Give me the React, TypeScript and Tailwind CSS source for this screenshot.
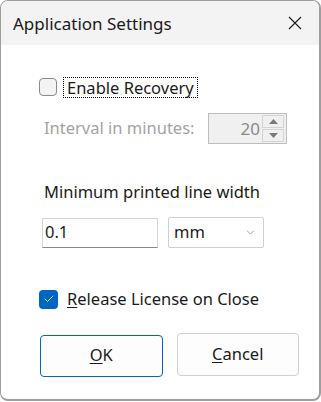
import { Check, ChevronDown } from 'lucide-react';

const font = { fontFamily: '"Noto Sans", "Open Sans", sans-serif' };

export default function App() {
  return (
    <div className="w-[321px] h-[402px] bg-white" style={font}>
      <div className="w-[321px] h-[401px] rounded-[8px] border border-[#9e9e9e] border-r-2 border-b-2 overflow-hidden flex flex-col bg-white">
        {/* title bar */}
        <div className="h-[44px] bg-[#f3f3f3] flex items-center justify-between pl-[12px] pr-[16px] shrink-0">
          <span className="text-[17px] text-[#1a1a1a] leading-none">Application Settings</span>
          <svg width="16" height="16" viewBox="0 0 16 16" className="text-[#1a1a1a]">
            <path d="M2 2L14 14M14 2L2 14" stroke="currentColor" strokeWidth={1.1} />
          </svg>
        </div>

        <div className="flex-1 flex flex-col pl-[38px] pr-[20px]">
          {/* enable recovery */}
          <div className="flex items-center mt-[32px] h-[20px]">
            <div className="w-[18px] h-[18px] rounded-[4px] border border-[#8a8a8a] bg-[#f3f3f3]" />
            <span className="ml-[6px] px-[3px] border border-dotted border-black text-[16.5px] leading-[19px] text-[#1a1a1a]">
              Enable Recovery
            </span>
          </div>

          {/* interval */}
          <div className="flex items-center mt-[16px] ml-[5px]">
            <span className="text-[16.5px] text-[#a3a3a3] w-[164px]">Interval in minutes:</span>
            <div className="w-[79px] h-[31px] border border-[#bdbdbd] bg-[#f0f0f0] flex items-center">
              <span className="flex-1 text-right text-[17px] text-[#8a8a8a] pr-[2px]">20</span>
              <div className="w-[22px] h-[27px] flex flex-col mr-[2px] gap-[1px]">
                <div className="flex-1 border border-[#d4d4d4] flex items-center justify-center">
                  <svg width="9" height="5" viewBox="0 0 9 5"><path d="M0 5L4.5 0L9 5Z" fill="#7a7a7a" /></svg>
                </div>
                <div className="flex-1 border border-[#d4d4d4] flex items-center justify-center">
                  <svg width="9" height="5" viewBox="0 0 9 5"><path d="M0 0L4.5 5L9 0Z" fill="#7a7a7a" /></svg>
                </div>
              </div>
            </div>
          </div>

          {/* line width */}
          <div className="mt-[37px] ml-[5px] text-[16.5px] text-[#1a1a1a] leading-[21px]">Minimum printed line width</div>
          <div className="flex items-center mt-[15px] ml-[3px] gap-[10px]">
            <div className="w-[116px] h-[30px] border border-[#d6d6d6] border-b-[#8a8a8a] flex items-center pl-[2px] text-[16.5px] text-[#1a1a1a]">
              0.1
            </div>
            <div className="w-[96px] h-[31px] border border-[#d0d0d0] rounded-[2px] flex items-center justify-between pl-[5px] pr-[6px] text-[16.5px] text-[#1a1a1a]">
              mm
              <ChevronDown size={13} strokeWidth={1.2} className="text-[#6a6a6a]" />
            </div>
          </div>

          {/* release license */}
          <div className="flex items-center mt-[39px]">
            <div className="w-[19px] h-[19px] rounded-[4px] bg-[#0067c0] flex items-center justify-center">
              <Check size={12} strokeWidth={1.6} className="text-white" />
            </div>
            <span className="ml-[9px] text-[16.5px] text-[#1a1a1a]">
              <span className="underline underline-offset-2">R</span>elease License on Close
            </span>
          </div>

          {/* buttons */}
          <div className="flex items-start mt-[21px] gap-[14px] ml-[1px]">
            <button className="w-[123px] h-[42px] mt-[2px] rounded-[4px] border border-[#0067c0] bg-[#fdfdfd] text-[16.5px] text-[#1a1a1a]">
              <span className="underline underline-offset-2">O</span>K
            </button>
            <button className="w-[123px] h-[43px] rounded-[4px] border border-[#d0d0d0] bg-[#fdfdfd] text-[16.5px] text-[#1a1a1a]">
              <span className="underline underline-offset-2">C</span>ancel
            </button>
          </div>
        </div>
      </div>
    </div>
  );
}
